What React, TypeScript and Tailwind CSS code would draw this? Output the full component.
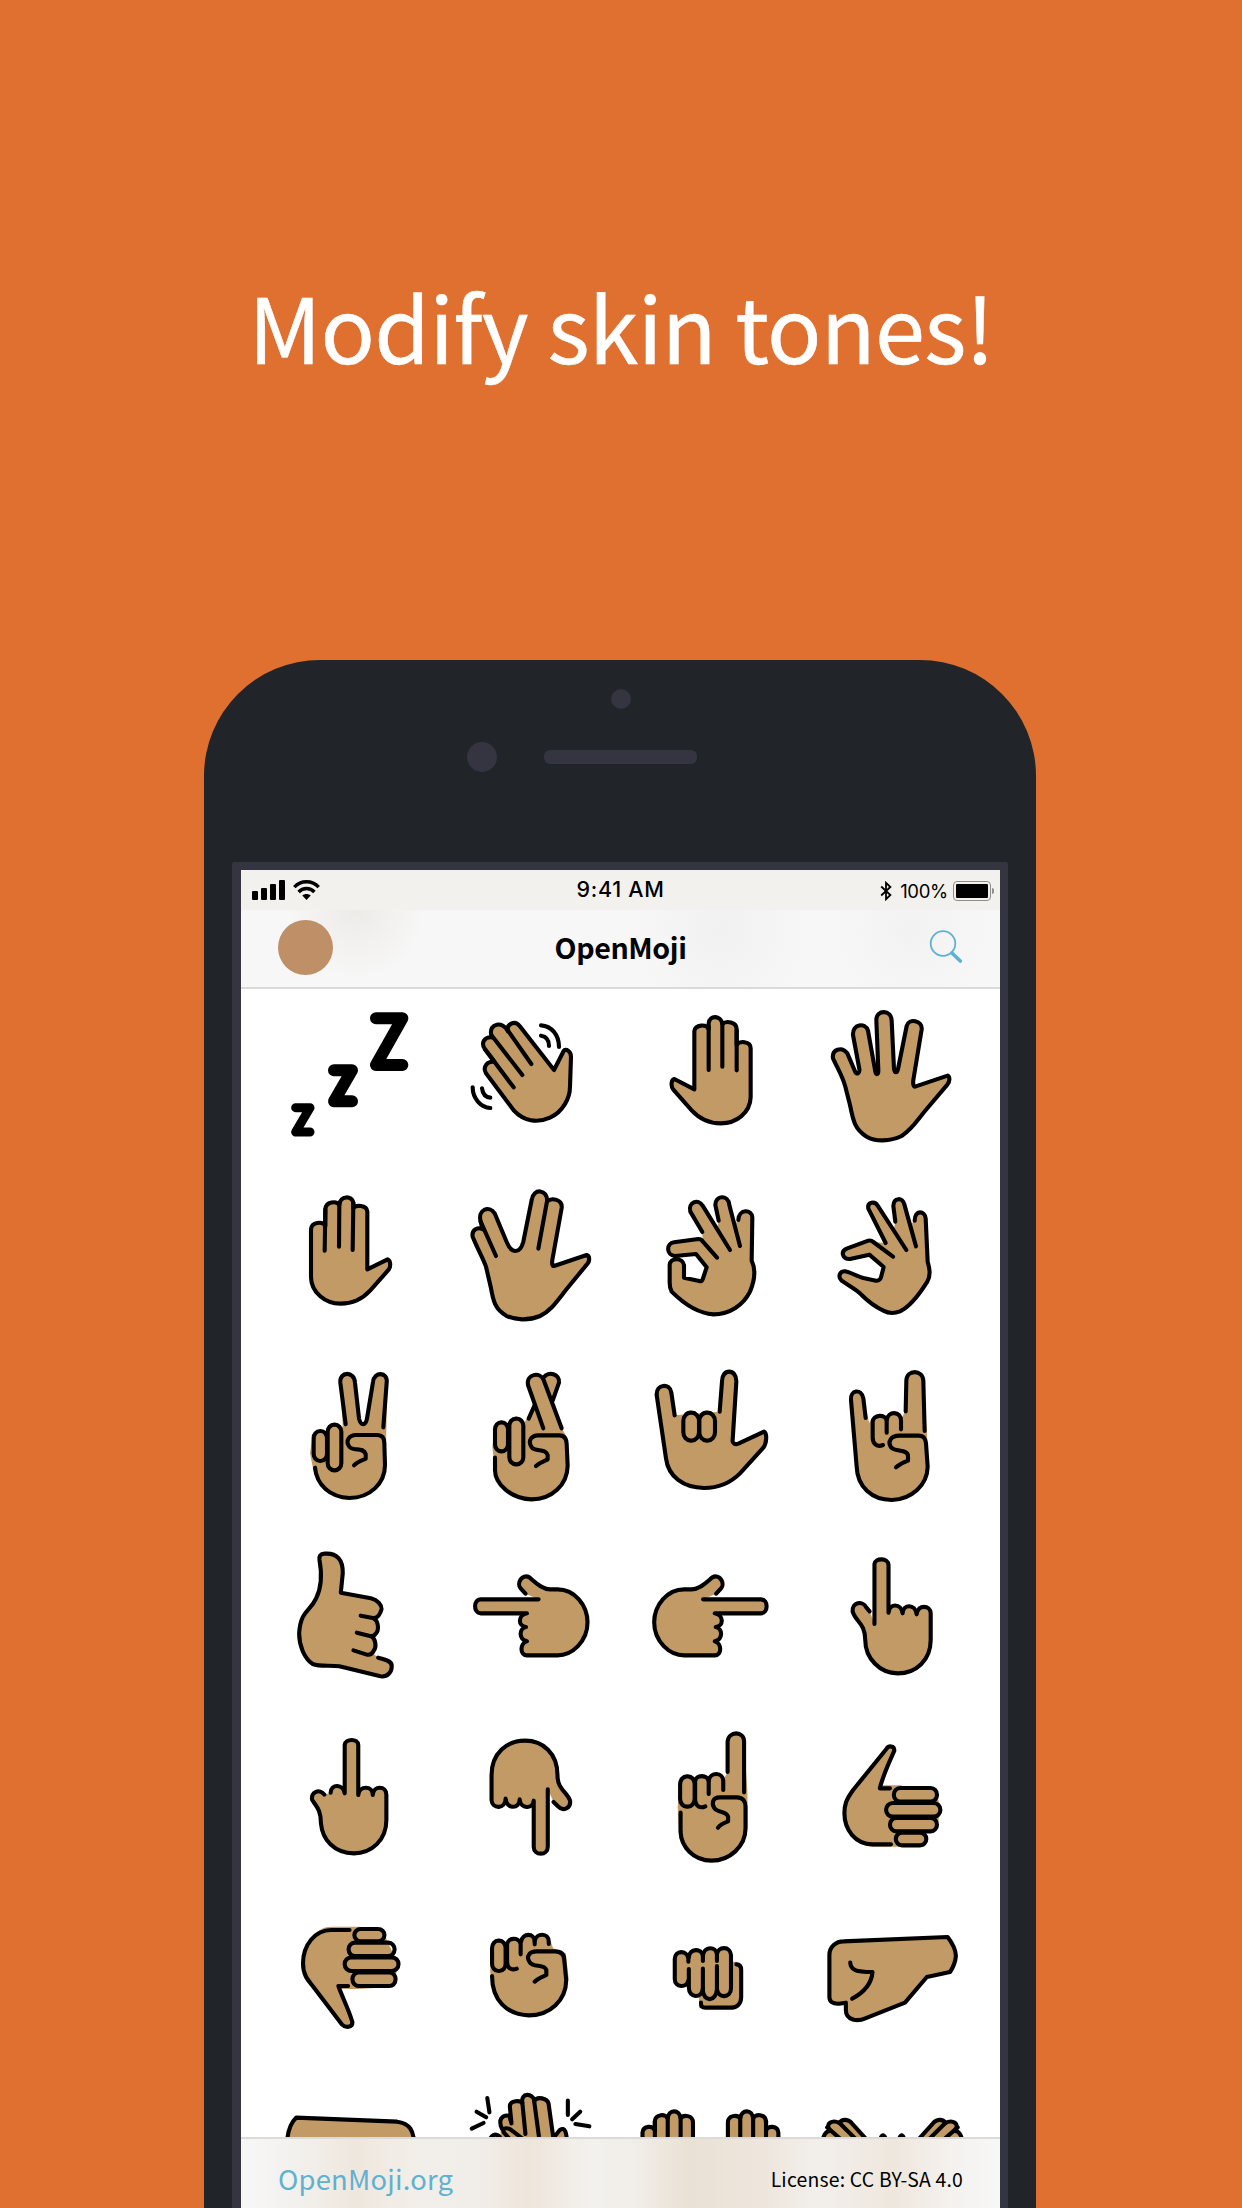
import React from "react";

const SKIN = "#c19a66";

type Glyph = { fills?: string[]; lines?: string[]; flip?: number; shapes?: Glyph[] };

/** Rounded capsule used for curled fingers. */
const pill = (x1: number, y1: number, x2: number, y2: number, rx: number, ry: number) =>
  `M${x1 + rx} ${y1}H${x2 - rx}A${rx} ${ry} 0 0 1 ${x2} ${y1 + ry}V${y2 - ry}A${rx} ${ry} 0 0 1 ${x2 - rx} ${y2}H${x1 + rx}A${rx} ${ry} 0 0 1 ${x1} ${y2 - ry}V${y1 + ry}A${rx} ${ry} 0 0 1 ${x1 + rx} ${y1}Z`;

function Shape({ g }: { g: Glyph }) {
  return (
    <g transform={g.flip ? `translate(${g.flip} 0) scale(-1 1)` : undefined}>
      {g.fills?.map((d, i) => (
        <path key={`f${i}`} d={d} fill={SKIN} />
      ))}
      {g.lines?.map((d, i) => (
        <path
          key={`l${i}`}
          d={d}
          fill="none"
          stroke="#000"
          strokeWidth={4.1}
          strokeLinecap="round"
          strokeLinejoin="round"
          vectorEffect="non-scaling-stroke"
        />
      ))}
      {g.shapes?.map((s, i) => <Shape key={`s${i}`} g={s} />)}
    </g>
  );
}

function Emoji({ g, box }: { g: Glyph; box: string }) {
  return (
    <svg className="h-[180px] w-[190px]" viewBox={box} preserveAspectRatio="none">
      <Shape g={g} />
    </svg>
  );
}

function Zzz() {
  return (
    <svg
      className="h-[180px] w-[190px]"
      viewBox="0 0 570 540"
      fill="none"
      stroke="#000"
      strokeLinecap="round"
      strokeLinejoin="round"
    >
      <path d="M408 85H487L408 225H487" strokeWidth="36" />
      <path d="M282 241H336L282 334H336" strokeWidth="36" />
      <path d="M167 353H210L167 426H210" strokeWidth="27" />
    </svg>
  );
}

const closed = (outline: string, ...extra: string[]): Glyph => ({
  fills: [outline],
  lines: [outline, ...extra],
});

const wave = closed(
  "M942 240L839 108C824 90 798 102 804 124C790 92 745 99 754 135L756 142C732 140 722 160 735 178L764 216C742 212 727 230 738 250L822 362C850 393 892 400 930 383C968 366 990 325 990 290L993 200C993 183 977 174 971 183Z",
  "M804 122L874 222",
  "M754 135L847 255",
  "M735 178L821 292",
  "M903 106C935 108 957 135 957 171",
  "M903 137C918 139 927 150 927 168",
  "M698 292C698 325 722 352 751 354",
  "M726 295C728 312 738 322 751 323",
);

const backHand = closed(
  "M223 298V124C226 102 260 102 266 118V100C268 74 304 76 307 102C318 92 350 94 350 118V165C356 152 392 152 392 175V322C390 368 350 400 302 400C270 400 238 386 215 361L160 299C152 288 153 270 163 267Z",
  "M266 110V240",
  "M307 100V230",
  "M350 120V241",
);

const spread = closed(
  "M885 290L983 257C990 260 990 275 982 284L920 357C890 392 880 415 845 438C810 455 765 455 740 440C705 418 700 395 690 345L676 290C668 260 655 240 639 205C635 178 665 168 682 190L706 246C710 254 720 250 718 237L699 135C697 102 735 96 744 122L766 245C768 255 775 255 775 242L769 90C769 58 814 58 815 92L822 237C824 250 831 250 834 237L860 108C866 84 908 90 905 118L880 270C878 285 882 291 885 290Z",
);

const palm = closed(
  "M382 298V124C380 104 346 104 340 115V98C336 76 300 76 298 105C290 92 257 94 256 118V168C248 152 214 156 213 178V322C214 366 254 401 302 401C335 401 366 388 391 361L446 299C453 290 452 272 443 268Z",
  "M256 118L254 242",
  "M298 98L297 230",
  "M340 98L338 240",
);

const vulcan = closed(
  "M942 288L1040 255C1050 258 1050 275 1040 284L980 357C950 395 930 425 900 438C865 453 825 450 800 438C765 418 760 395 752 350L738 290C728 262 712 235 698 200C694 178 715 170 728 178L722 155C712 118 748 105 764 130L800 216C815 252 840 252 850 215L875 90C880 52 924 58 921 94C935 82 968 88 965 114L937 270C935 283 938 289 942 288Z",
  "M722 155L768 258",
  "M921 94L895 236",
);

const okOutline =
  "M355 150C356 115 397 118 397 142L395 272C408 300 405 330 390 365C370 405 330 433 280 433C230 430 190 400 155 365C149 355 149 345 149 338V285C150 262 188 262 192 285V323L238 333C244 335 247 332 249 325L260 292L228 252L165 258C138 256 138 220 162 217L235 207C240 207 245 209 248 214L291 263";
const ok: Glyph = {
  fills: [
    "M355 150C356 115 397 118 397 142L395 272C408 300 405 330 390 365C370 405 330 433 280 433C230 430 190 400 155 365C149 355 149 345 149 338V285C150 262 188 262 192 285V323L238 333C244 335 247 332 249 325L260 292L228 252L165 258C138 256 138 220 162 217L235 207C240 207 245 209 248 214L247 186L211 125C203 98 235 86 248 107L291 177L296 152L286 105C285 75 325 75 328 105L342 165Z",
  ],
  lines: [
    okOutline,
    "M247 186L211 125C203 98 235 84 248 107L330 240",
    "M296 152L286 105C285 75 325 73 328 105L360 228",
  ],
};

const pinch: Glyph = {
  fills: [
    "M884 152C884 118 915 122 917 145L923 275C930 300 932 315 922 335C900 370 870 410 840 424C820 432 805 430 790 422C765 410 745 395 725 375C710 358 690 350 665 332C652 320 660 302 675 304C695 308 715 320 730 324L768 332C778 333 783 325 784 318L791 291L748 254L690 267C668 268 660 245 680 236L745 212C752 211 757 213 760 216L797 219L744 113C745 95 765 93 772 107L820 185L826 155L820 108C821 82 850 83 853 105L870 165Z",
  ],
  lines: [
    "M884 152C884 118 915 122 917 145L923 275C930 300 932 315 922 335C900 370 870 410 840 424C820 432 805 430 790 422C765 410 745 395 725 375C710 358 690 350 665 332C652 320 660 302 675 304C695 308 715 320 730 324L768 332C778 333 783 325 784 318L791 291L748 254L690 267C668 268 660 245 680 236L745 212C752 211 757 213 760 216L819 260",
    "M797 219L745 116C741 95 765 93 773 107L859 240",
    "M826 155L820 108C821 82 848 81 853 103L888 229",
  ],
};

const victory: Glyph = {
  fills: [
    "M308 225L300 95C298 65 345 65 346 95L357 205C362 230 377 230 381 205L396 92C400 65 443 65 442 95L437 340C440 400 390 444 328 444C270 442 225 400 218 350L210 310L217 260C220 240 255 238 260 245C262 222 300 220 306 240Z",
  ],
  lines: [
    "M317 223L301 98C298 64 343 62 345 98L357 205C362 228 377 228 381 205L399 96C402 64 444 64 440 98L430 232",
    pill(221, 243, 261, 333, 19, 21),
    pill(263, 224, 304, 361, 20, 21),
    "M342 346C352 335 370 330 377 326V312C370 290 340 305 328 290C315 272 328 255 348 255H412C428 255 433 265 433 280L435 345C435 400 390 444 328 444C270 442 230 405 225 353",
  ],
};

const crossed: Glyph = {
  fills: [
    "M757 290L765 240C768 212 800 212 806 225C808 205 845 200 852 220L884 165L864 105C860 72 895 62 909 80C925 62 960 72 957 98L938 152L965 235L983 265V347C982 405 935 448 875 448C810 446 765 400 765 360Z",
  ],
  lines: [
    "M866 206L884 165",
    "M911 82C925 62 960 72 957 98L938 152",
    "M910 235L864 105C858 72 900 64 911 90L965 235",
    pill(765, 217, 804, 304, 19, 21),
    pill(808, 206, 850, 343, 20, 21),
    "M888 348C900 337 915 332 923 328V315C916 293 887 308 875 292C862 274 874 256 894 256H958C974 256 980 268 980 282L983 347C982 405 935 448 875 448C810 446 765 400 765 360V323",
  ],
};

const ily = closed(
  "M164 196L154 128C150 98 108 102 110 135L138 325C145 380 190 413 252 414C290 414 330 400 360 370L430 293C440 280 442 250 432 245L355 281C345 285 336 280 338 270L349 95C350 55 305 55 306 95L299 185",
);
ily.lines!.push(pill(190, 188, 237, 272, 22, 25), pill(238, 188, 285, 272, 22, 25));

const horns: Glyph = {
  fills: [
    "M692 150C692 120 722 112 729 145L748 220C755 192 790 190 800 205C805 185 840 185 845 205L855 184V92C858 58 910 58 910 92L921 250L923 350C922 405 875 448 815 450C755 450 712 410 710 350Z",
  ],
  lines: [
    "M737 204L730 145C724 114 690 120 693 150L710 350C712 410 755 450 815 450C875 448 922 405 923 350L918 280C916 262 908 257 895 257H838C812 257 803 275 812 290C822 308 865 295 864 320V332C850 337 838 343 828 352",
    "M857 184L859 92C860 58 908 58 910 92L914 243",
    "M800 248V212C798 192 758 192 758 217V262C758 283 772 292 789 285",
    "M800 210C804 182 843 182 843 212V238",
  ],
};

const callMe: Glyph = {
  fills: [
    "M208 187L213 130C215 90 200 68 175 70C165 72 163 80 164 90C170 130 168 170 160 200C150 240 122 245 122 310C122 340 132 385 150 402C165 411 185 405 205 407L290 439C305 442 313 425 313 410C314 398 308 390 285 383L276 372C283 350 278 325 270 318C287 315 287 275 276 264C290 262 295 215 270 205Z",
  ],
  lines: [
    "M285 383C308 390 314 398 313 410C313 425 305 442 290 439L205 409C185 405 165 411 150 402C132 385 122 345 122 310C125 240 145 245 157 205C169 170 169 130 164 90C163 78 165 72 175 71C200 68 213 90 212 130L208 188L270 205C285 210 292 225 292 237C290 250 284 266 274 264L249 257",
    "M276 266C285 272 288 300 280 311C277 318 274 320 268 318L241 308",
    "M272 320C280 328 282 350 276 362C272 374 266 376 260 373L234 361",
  ],
};

const pointSide = closed(
  "M589 191L579 175C570 160 582 130 597 142C608 155 622 178 640 178H655C690 178 717 225 717 277C717 335 685 376 655 376H592C577 376 577 340 592 334C575 330 575 295 590 291C573 288 573 255 592 250H497C481 250 481 208 497 208H616",
);

const pointUpBack = closed(
  "M1309 282V102C1310 83 1338 83 1338 105V248C1340 220 1364 218 1367 250C1368 222 1393 220 1396 253C1398 222 1425 225 1425 250V330C1425 390 1395 430 1357 430C1320 430 1290 385 1290 330C1290 280 1270 275 1264 245C1262 215 1285 212 1292 232L1299 244",
);

const middle = closed(
  "M174 254C165 235 145 245 149 270C158 290 167 300 167 340C170 390 195 430 235 430C272 430 302 390 302 330V255C302 226 275 226 274 255C274 226 246 226 244 255V105C244 85 217 85 216 105V250C213 222 188 220 187 248",
);

const pointDown = closed(
  "M647 276L657 290C666 305 683 295 681 272C675 245 655 240 655 195C655 130 625 92 588 92C550 92 519 130 519 195V270C520 298 548 298 548 266C550 298 577 298 577 268C579 298 604 298 606 272V410C606 438 635 438 635 410V238",
);

const indexUp: Glyph = {
  fills: [
    "M903 290L908 215C908 190 935 190 940 205C945 190 965 190 968 205C972 185 997 185 999 205L1006 186V95C1008 62 1040 62 1040 95L1047 250V355C1043 410 1010 452 973 452C935 452 905 410 905 365Z",
  ],
  lines: [
    pill(908, 199, 938, 290, 14, 24),
    "M967 252V214C965 193 940 193 939 214V268C940 290 950 296 960 289",
    "M967 212C970 185 997 185 997 214V240",
    "M1006 186V95C1008 62 1040 62 1040 95V247",
    "M986 353C992 342 1000 338 1007 334V320C1002 300 985 310 979 295C972 280 975 262 990 262H1025C1038 262 1043 275 1043 290V355C1043 410 1010 452 973 452C935 452 910 410 909 365V308",
  ],
};

const thumbUp: Glyph = {
  fills: [
    "M1341 226H1322C1328 190 1340 155 1350 122C1350 105 1338 105 1334 115L1265 240C1250 270 1247 285 1247 310C1247 360 1270 410 1305 410H1412L1416 368H1430L1440 340L1445 300L1436 234L1365 232V226Z",
  ],
  lines: [
    "M1341 235H1320C1328 190 1340 155 1350 122C1350 105 1338 107 1334 116L1265 240C1250 270 1247 285 1247 310C1247 360 1270 403 1305 403H1343",
    pill(1349, 234, 1438, 275, 13, 20),
    pill(1333, 279, 1445, 320, 14, 20),
    pill(1341, 324, 1438, 364, 13, 20),
    pill(1353, 368, 1416, 406, 13, 19),
  ],
};

const thumbDown: Glyph = {
  fills: [
    "M188 80H245L290 87L300 110L325 190L319 260L245 267H205C212 295 225 330 232 367C232 383 218 387 210 375L150 258C140 240 130 225 130 190C130 135 155 80 188 80Z",
  ],
  lines: [
    "M226 90H188C155 90 130 135 130 190C130 225 140 240 150 258L210 373C218 385 232 383 232 367C225 330 212 295 203 258H223",
    pill(236, 87, 298, 124, 13, 18),
    pill(224, 128, 319, 168, 13, 20),
    pill(216, 172, 327, 213, 14, 20),
    pill(232, 217, 321, 258, 13, 20),
  ],
};

const fist: Glyph = {
  fills: [
    "M516 215L520 140C522 120 545 118 550 130C553 115 572 112 580 122C583 102 605 100 609 115C615 100 635 102 640 120L646 145L672 160L678 235C673 300 640 346 596 346C550 344 520 300 518 228Z",
  ],
  lines: [
    pill(520, 122, 548, 213, 13, 22),
    "M579 163V132C575 110 552 112 551 134V185C551 205 560 212 571 206",
    "M580 125C583 98 608 98 608 125V133",
    "M608 122C612 98 637 98 637 125V132",
    "M608 245C615 235 625 230 632 225V210C627 190 605 205 597 185C590 170 597 154 612 154H650C665 154 669 165 669 180L673 240C673 300 640 346 596 346C550 344 520 300 520 228",
  ],
};

const oncoming: Glyph = {
  fills: [
    "M897 175C897 152 920 150 926 165C930 148 950 146 955 160C960 140 980 140 985 158C990 140 1013 142 1013 165V185H1024C1034 190 1034 200 1034 210V290C1034 312 1025 323 1015 325H947V292C935 290 926 280 926 255C918 262 897 262 897 235Z",
  ],
  lines: [
    "M925 185V175C922 150 897 150 897 177V237C897 263 922 265 925 242",
    "M926 207V262C926 296 953 296 955 265",
    "M926 172C927 144 953 144 955 168V183",
    "M955 206V270C956 307 982 307 984 268",
    "M955 167C957 138 982 138 984 163V183",
    "M984 198V265C985 297 1013 295 1013 265V165C1012 138 986 138 984 163",
    "M925 185V242",
    "M1024 193C1032 193 1034 200 1034 210V290C1034 312 1025 323 1015 323H960C953 323 951 318 951 308",
  ],
};
oncoming.lines!.splice(6, 1);

const rightFist = closed(
  "M1216 165C1216 140 1230 124 1245 124L1460 111C1470 130 1477 150 1477 168C1476 185 1470 205 1465 216L1417 231L1372 308L1290 355C1275 365 1250 362 1250 330V308L1236 311C1222 312 1216 305 1216 290Z",
  "M1259 188C1260 210 1270 216 1305 216C1303 250 1290 275 1263 296",
);

const leftFist = closed("M162 260C162 215 168 190 179 173L367 185C390 190 399 210 399 260");

const clap: Glyph = {
  fills: [
    "M538 260C540 230 550 215 560 222L558 185C560 165 570 165 577 168V140C577 120 595 118 600 130V112C604 98 618 100 622 118C630 110 647 115 648 130L658 232L672 210C680 205 683 215 684 260Z",
  ],
  lines: [
    "M562 205C555 180 562 163 576 167L580 190L577 140C577 120 597 120 600 130C597 95 620 100 623 122C628 108 646 115 649 130L658 234L670 210C680 200 683 215 684 260",
    "M600 125L606 222",
    "M622 120L631 228",
    "M600 235L578 208C568 200 562 208 566 218L576 236",
    "M538 245C542 225 550 218 558 230",
    "M535 114L539 157",
    "M515 155L533 172",
    "M528 189L506 206",
    "M685 122V165",
    "M708 155L693 178",
    "M699 192L725 199",
  ],
};

const raised = closed(
  "M824 260V218C825 196 845 196 847 212V184C848 162 868 160 871 176C872 147 893 147 895 175C900 163 918 165 918 188V260",
  "M847 184V260",
  "M871 172V260",
  "M895 172V260",
);

const openHand = closed(
  "M1160 260C1158 225 1166 213 1174 213C1162 190 1178 178 1191 189C1196 175 1208 178 1214 190L1242 240L1250 260",
  "M1168 202L1202 250",
  "M1191 189L1226 245",
);

const raisedPair: Glyph = { shapes: [raised, { ...raised, flip: 1901 }] };
const openPair: Glyph = {
  shapes: [
    openHand,
    { ...openHand, flip: 2579 },
    closed("M1265 260C1267 215 1276 215 1281 260"),
    closed("M1298 260C1303 215 1311 215 1314 260"),
  ],
};

const rows: { glyphs: Glyph[]; boxes: string[] }[] = [
  {
    glyphs: [wave, backHand, spread],
    boxes: ["570 0 570 540", "0 0 570 540", "570 0 570 540"],
  },
  {
    glyphs: [palm, vulcan, ok, pinch],
    boxes: ["0 0 570 540", "570 0 570 540", "0 0 570 540", "570 0 570 540"],
  },
  {
    glyphs: [victory, crossed, ily, horns],
    boxes: ["0 0 570 540", "570 0 570 540", "0 0 570 540", "570 0 570 540"],
  },
  {
    glyphs: [callMe, pointSide, { ...pointSide, flip: 1571.5 }, pointUpBack],
    boxes: ["0 0 392 540", "392 0 392 540", "784 0 392 540", "1176 0 392 540"],
  },
  {
    glyphs: [middle, pointDown, indexUp, thumbUp],
    boxes: ["0 0 392 540", "392 0 392 540", "784 0 392 540", "1176 0 392 540"],
  },
  {
    glyphs: [thumbDown, fist, oncoming, rightFist],
    boxes: ["0 -30 392 540", "392 -30 392 540", "784 -30 392 540", "1176 -30 392 540"],
  },
  {
    glyphs: [leftFist, clap, raisedPair, openPair],
    boxes: ["74.5 30 353.8 540", "428.3 30 353.8 540", "782.1 30 353.8 540", "1136 30 353.8 540"],
  },
];

function StatusBar() {
  return (
    <div className="flex h-10 shrink-0 items-center justify-between bg-[#f3f1ed] font-['Inter','Liberation_Sans',sans-serif] text-black">
      <div className="flex w-[280px] items-end gap-2 pl-[11px]">
        <div className="flex h-5 items-end gap-[3px]">
          <div className="h-[9px] w-[6px] rounded-[1px] bg-black" />
          <div className="h-[12px] w-[6px] rounded-[1px] bg-black" />
          <div className="h-[16px] w-[6px] rounded-[1px] bg-black" />
          <div className="h-[20px] w-[6px] rounded-[1px] bg-black" />
        </div>
        <svg className="h-5 w-[27px]" viewBox="0 0 27 20" fill="none" stroke="#000" strokeWidth="3.4">
          <path d="M1.3 7.2C8 0 19 0 25.7 7.2" />
          <path d="M5.6 12C10 7.4 17 7.4 21.4 12" />
          <path d="M13.5 20L9.3 15.6C11.7 13.6 15.3 13.6 17.7 15.6Z" fill="#000" stroke="none" />
        </svg>
      </div>
      <div className="whitespace-nowrap text-[21.5px] font-medium leading-none tracking-[0.7px]">9:41 AM</div>
      <div className="flex w-[280px] items-center justify-end pr-[6px]">
        <svg className="mr-2 mt-px h-5 w-3" viewBox="0 0 12 20" fill="none" stroke="#000" strokeWidth="1.8">
          <path d="M1.2 5.5L10.4 14L6 18.2V1.8L10.4 6L1.2 14.5" />
        </svg>
        <div className="mr-[5px] mt-[3px] text-[18.5px] leading-none tracking-[-0.3px]">100%</div>
        <div className="mt-[2px] flex h-[20px] w-[38px] rounded-[4px] border-[1.5px] border-[#8f8e8c] p-[2px]">
          <div className="flex-1 rounded-[1px] bg-black" />
        </div>
        <div className="ml-px mt-[2px] h-[6px] w-[2px] rounded-r-full bg-[#8f8e8c]" />
      </div>
    </div>
  );
}

function NavBar() {
  return (
    <div className="grid h-[79px] shrink-0 grid-cols-3 items-center border-b-2 border-[#dadada] bg-[#f7f7f7] bg-[radial-gradient(circle_at_115px_0px,#edebe8_0,transparent_70px),radial-gradient(circle_at_480px_20px,#f1f1f1_0,transparent_90px),radial-gradient(circle_at_670px_20px,#f2f2f2_0,transparent_80px)] px-[37px] pb-[3px]">
      <div className="size-[55px] rounded-full bg-[#bf8f68]" />
      <div className="text-center text-[28.6px] font-bold leading-none tracking-[-0.4px] text-black">
        OpenMoji
      </div>
      <svg className="mb-0.5 h-[34px] w-[34px] justify-self-end" viewBox="0 0 34 34" fill="none" stroke="#5fb1d1">
        <circle cx="14" cy="14.5" r="12.3" strokeWidth="1.8" />
        <path d="M23 24L31.3 32" strokeWidth="3.6" strokeLinecap="round" />
      </svg>
    </div>
  );
}

function Footer() {
  return (
    <div className="flex h-[71px] shrink-0 items-center justify-between border-t-2 border-[#dddbd9] bg-[#f2efeb] bg-[linear-gradient(90deg,#f7f7f7_0%,#f3f1ee_7%,#efe7de_15%,#f2efea_24%,#f1eeea_31%,#eee5da_38%,#f3f1ee_46%,#f1ede8_52%,#eae1d5_59%,#eee6dd_69%,#f2efeb_76%,#efe7de_86%,#f5f3f1_95%,#f7f7f7_100%)] px-[37px]">
      <div className="mt-[10px] text-[27.4px] leading-none tracking-[0.2px] text-[#5fb1d1]">
        OpenMoji.org
      </div>
      <div className="mt-[10px] text-[19.4px] leading-none tracking-[0.2px] text-black">
        License: CC BY-SA 4.0
      </div>
    </div>
  );
}

export default function App() {
  return (
    <div className="flex h-[2208px] w-[1242px] flex-col overflow-hidden bg-[#df7030] font-['Noto_Sans_CJK_SC','Open_Sans',sans-serif]">
      <h1 className="flex h-[660px] shrink-0 items-center justify-center pb-[10px] text-[90px] font-normal leading-none tracking-[-0.75px] text-white [-webkit-text-stroke:0.5px_white]">
        Modify skin tones!
      </h1>
      <div className="ml-[204px] flex h-[1548px] w-[832px] flex-col rounded-t-[116px] bg-[#212428]">
        <div className="flex h-[202px] shrink-0 flex-col pt-[29px]">
          <div className="ml-[407px] size-5 rounded-full bg-[#343541]" />
          <div className="mt-[33px] flex items-center">
            <div className="ml-[263px] size-[30px] rounded-full bg-[#343541]" />
            <div className="ml-[47px] h-[14px] w-[153px] rounded-[6px] bg-[#343541]" />
          </div>
        </div>
        <div className="mx-7 flex grow flex-col rounded-t-[3px] border-x-[8px] border-t-[8px] border-[#343541] bg-[#343541] pl-px">
          <div className="flex h-[1338px] w-[759px] flex-col overflow-hidden bg-white">
            <StatusBar />
            <NavBar />
            <div className="h-[1148px] shrink-0 overflow-hidden pt-px">
              <div className="-ml-px grid w-[760px] grid-cols-[repeat(4,190px)]">
                <Zzz />
                {rows.flatMap((row, r) =>
                  row.glyphs.map((g, c) => <Emoji key={`${r}-${c}`} g={g} box={row.boxes[c]} />),
                )}
              </div>
            </div>
            <Footer />
          </div>
        </div>
      </div>
    </div>
  );
}
